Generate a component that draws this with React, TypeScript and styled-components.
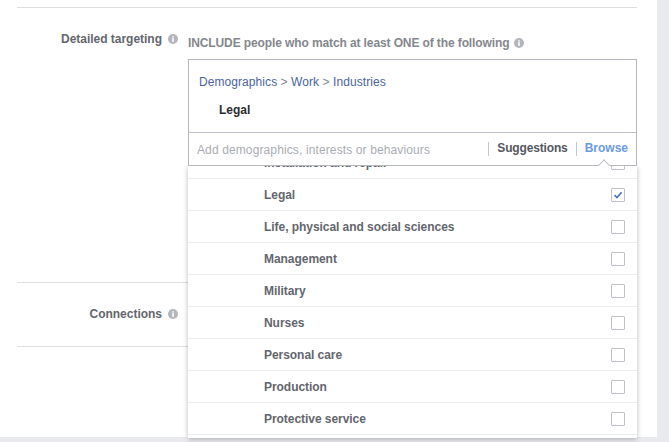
import styled, { createGlobalStyle } from "styled-components";

const GlobalStyle = createGlobalStyle`
    html, body {
        margin: 0;
        padding: 0;
        background: #e9eaed;
        font-family: "Liberation Sans", Arial, sans-serif;
        font-size: 12px;
    }
`;

const Page = styled.div`
    width: 669px;
    height: 442px;
    overflow: hidden;
`;

const Panel = styled.div`
    width: 657px;
    height: 437px;
    background: #ffffff;
    box-sizing: border-box;
    padding: 7px 20px 0 17px;
`;

const FormRow = styled.div<{ $height: number }>`
    display: grid;
    grid-template-columns: 161px 1fr;
    column-gap: 10px;
    height: ${(p) => p.$height}px;
    box-sizing: border-box;
    border-top: 1px solid #dddfe2;
`;

const LastRule = styled.div`
    border-top: 1px solid #dddfe2;
`;

const Label = styled.div`
    display: flex;
    justify-content: flex-end;
    align-items: center;
    gap: 6px;
    height: 14px;
    margin-top: 24px;
    font-weight: bold;
    letter-spacing: -0.02px;
    color: #63666e;
`;

const Field = styled.div`
    position: relative;
`;

const Heading = styled.div`
    display: flex;
    align-items: center;
    gap: 5px;
    height: 14px;
    margin-top: 28px;
    margin-bottom: 9px;
    font-weight: bold;
    letter-spacing: -0.11px;
    color: #84878e;
`;

const InfoDot = styled.span`
    display: inline-flex;
    align-items: center;
    justify-content: center;
    width: 10px;
    height: 10px;
    flex: none;
`;

const TargetBox = styled.div`
    position: relative;
    z-index: 2;
    box-sizing: border-box;
    height: 107px;
    border: 1px solid #b4b7be;
    background: #ffffff;
    display: flex;
    flex-direction: column;
`;

const Selected = styled.div`
    height: 73px;
    box-sizing: border-box;
    padding: 15px 10px 0;
    border-bottom: 1px solid #bdc0c7;
`;

const Crumbs = styled.div`
    height: 14px;
    line-height: 14px;
    letter-spacing: 0.07px;
    color: #7f8590;
    a {
        color: #4a64a0;
        text-decoration: none;
    }
`;

const Chosen = styled.div`
    margin: 14px 0 0 20px;
    height: 14px;
    line-height: 14px;
    font-weight: bold;
    color: #2a2d33;
`;

const SearchBar = styled.div`
    flex: 1;
    display: flex;
    align-items: center;
    padding: 0 8px;
`;

const Placeholder = styled.div`
    flex: 1;
    color: #a9acb3;
    letter-spacing: 0.12px;
    padding-top: 1px;
`;

const Tab = styled.div<{ $active?: boolean }>`
    font-weight: bold;
    height: 14px;
    line-height: 13px;
    padding-left: 8px;
    margin-left: 8px;
    border-left: 1px solid #c4c7cc;
    letter-spacing: ${(p) => (p.$active ? "0" : "-0.15px")};
    color: ${(p) => (p.$active ? "#6a9ae6" : "#55585f")};
`;

const Notch = styled.div`
    position: absolute;
    right: 28px;
    bottom: -4px;
    width: 7px;
    height: 7px;
    background: #ffffff;
    border-top: 1px solid #bdc0c7;
    border-left: 1px solid #bdc0c7;
    transform: rotate(45deg);
`;

const Dropdown = styled.div`
    position: absolute;
    z-index: 1;
    left: 0;
    right: 0;
    height: 272px;
    overflow: hidden;
    background: #ffffff;
    box-shadow: 0 1px 5px rgba(0, 0, 0, 0.28);
`;

const OptionList = styled.div`
    margin-top: -19px;
`;

const Option = styled.div`
    box-sizing: border-box;
    height: 32px;
    display: flex;
    align-items: center;
    justify-content: space-between;
    padding: 0 12px 0 76px;
    border-bottom: 1px solid #e9ebee;
    font-weight: bold;
    letter-spacing: -0.05px;
    color: #63666e;
`;

const CheckBox = styled.span`
    box-sizing: border-box;
    width: 14px;
    height: 14px;
    border: 1px solid #bfc2c8;
    border-radius: 1px;
    display: flex;
    align-items: center;
    justify-content: center;
    background: #ffffff;
`;

const options = [
    "Installation and repair",
    "Legal",
    "Life, physical and social sciences",
    "Management",
    "Military",
    "Nurses",
    "Personal care",
    "Production",
    "Protective service",
];

function Info() {
    return (
        <InfoDot>
            <svg width="10" height="10" viewBox="0 0 10 10">
                <circle cx="5" cy="5" r="5" fill="#b3b6bc" />
                <rect x="4.2" y="4.2" width="1.6" height="3.6" fill="#ffffff" />
                <rect x="4.2" y="2.2" width="1.6" height="1.4" fill="#ffffff" />
            </svg>
        </InfoDot>
    );
}

export default function App() {
    return (
        <Page>
            <GlobalStyle />
            <Panel>
                <FormRow $height={275}>
                    <Label>
                        Detailed targeting
                        <Info />
                    </Label>
                    <Field>
                        <Heading>
                            INCLUDE people who match at least ONE of the following
                            <Info />
                        </Heading>
                        <TargetBox>
                            <Selected>
                                <Crumbs>
                                    <a>Demographics</a> &gt; <a>Work</a> &gt; <a>Industries</a>
                                </Crumbs>
                                <Chosen>Legal</Chosen>
                            </Selected>
                            <SearchBar>
                                <Placeholder>Add demographics, interests or behaviours</Placeholder>
                                <Tab>Suggestions</Tab>
                                <Tab $active>Browse</Tab>
                            </SearchBar>
                            <Notch />
                        </TargetBox>
                        <Dropdown>
                            <OptionList>
                                {options.map((name) => (
                                    <Option key={name}>
                                        {name}
                                        <CheckBox>
                                            {name === "Legal" && (
                                                <svg width="10" height="10" viewBox="0 0 10 10">
                                                    <path d="M1.5 5.2 L4 7.6 L8.6 2.2" fill="none" stroke="#4a6fb5" strokeWidth="1.6" />
                                                </svg>
                                            )}
                                        </CheckBox>
                                    </Option>
                                ))}
                            </OptionList>
                        </Dropdown>
                    </Field>
                </FormRow>
                <FormRow $height={64}>
                    <Label>
                        Connections
                        <Info />
                    </Label>
                    <div />
                </FormRow>
                <LastRule />
            </Panel>
        </Page>
    );
}
